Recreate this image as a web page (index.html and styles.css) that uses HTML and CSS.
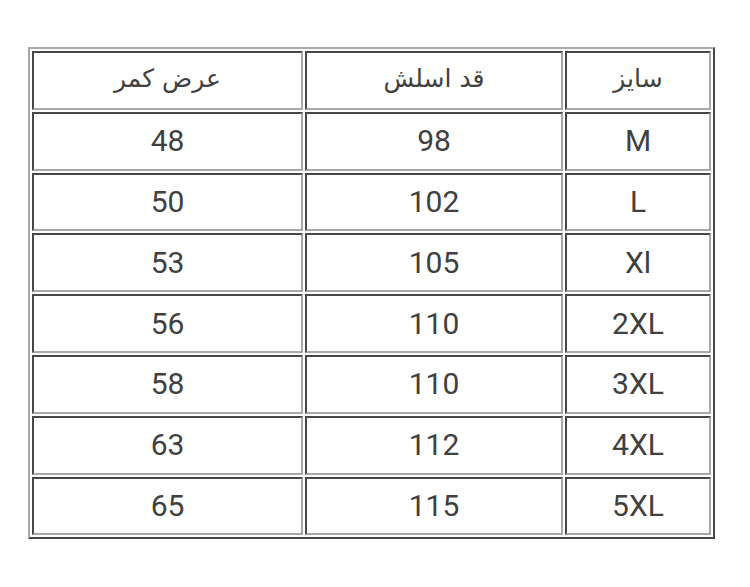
FILE: index.html
```html
<!DOCTYPE html>
<html lang="fa">
<head>
<meta charset="utf-8">
<link rel="stylesheet" href="styles.css">
</head>
<body>
<div class="page">
<table class="sizes" dir="rtl">
<tr><td class="c-size">سایز</td><td class="c-len">قد اسلش</td><td class="c-waist">عرض کمر</td></tr>
<tr><td>M</td><td>98</td><td>48</td></tr>
<tr><td>L</td><td>102</td><td>50</td></tr>
<tr><td>Xl</td><td>105</td><td>53</td></tr>
<tr><td>2XL</td><td>110</td><td>56</td></tr>
<tr><td>3XL</td><td>110</td><td>58</td></tr>
<tr><td>4XL</td><td>112</td><td>63</td></tr>
<tr><td>5XL</td><td>115</td><td>65</td></tr>
</table>
</div>
</body>
</html>
```
FILE: styles.css
```css
html, body {
  margin: 0;
  padding: 0;
  background: #ffffff;
}
.page {
  padding: 47px 0 0 28px;
}
.sizes {
  border-collapse: separate;
  border-spacing: 2px;
  border-style: solid;
  border-width: 2px;
  border-color: #a8a8a8 #474747 #474747 #a8a8a8;
  width: 687px;
  font-family: Roboto, "DejaVu Sans", sans-serif;
  font-size: 30px;
  color: #404040;
  table-layout: fixed;
}
.sizes td {
  border-style: solid;
  border-width: 2px;
  border-color: #474747 #a8a8a8 #a8a8a8 #474747;
  height: 54.8px;
  padding: 0;
  text-align: center;
  vertical-align: middle;
  line-height: 1;
}
.c-size { width: 142px; }
.c-len { width: 254px; }
.c-waist { width: 267px; }
.sizes tr:first-child td {
  font-family: "DejaVu Sans", sans-serif;
  font-size: 25px;
  padding-bottom: 4px;
  height: 50.8px;
}
```
